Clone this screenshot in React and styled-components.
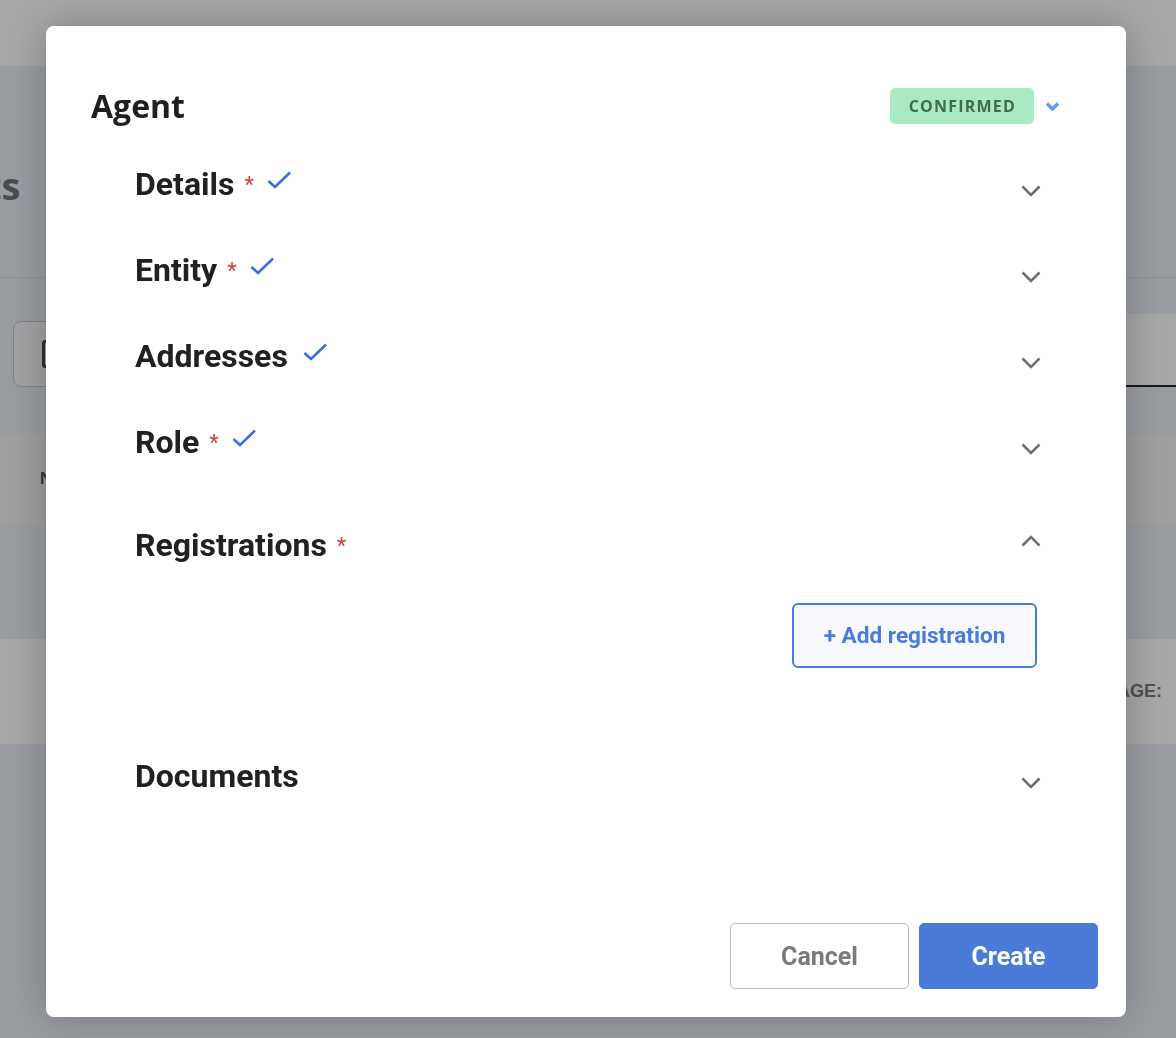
import React from "react";
import styled, { createGlobalStyle } from "styled-components";

const GlobalStyle = createGlobalStyle`
  html, body {
    margin: 0;
    padding: 0;
    overflow: hidden;
  }
  body {
    font-family: Roboto, "Liberation Sans", sans-serif;
  }
  * {
    box-sizing: border-box;
  }
`;

/* page behind the dialog */

const Page = styled.div`
  width: 100vw;
  height: 100vh;
  background-color: #eaf0f8;
  overflow: hidden;
`;

const TopBar = styled.div`
  height: 66px;
  background-color: #fff;
`;

const TitleArea = styled.div`
  height: 212px;
  display: flex;
  align-items: center;
  padding-top: 26px;
  border-bottom: 1px solid #d6dbe3;
`;

const PageTitle = styled.h1`
  margin: 0 0 0 -110px;
  font-family: "Open Sans", sans-serif;
  font-size: 38px;
  font-weight: 700;
  color: #707378;
`;

const Toolbar = styled.div`
  height: 156px;
  display: flex;
  justify-content: space-between;
  align-items: flex-start;
  padding-top: 36px;
`;

const FilterBox = styled.div`
  margin: 7px 0 0 13px;
  width: 320px;
  height: 66px;
  border: 1px solid #c3c6ca;
  border-radius: 8px;
  background-color: #f7f8fa;
  display: flex;
  align-items: center;
  padding-left: 28px;
`;

const FilterIcon = styled.div`
  width: 18px;
  height: 28px;
  border: 3px solid #4a4a4a;
  border-radius: 3px;
`;

const SearchField = styled.div`
  width: 300px;
  height: 73px;
  background-color: #fff;
  border-bottom: 2px solid #262626;
`;

const TableHead = styled.div`
  height: 90px;
  background-color: #f3f3f3;
  display: flex;
  align-items: center;
  padding-left: 40px;
  font-family: "Liberation Sans", sans-serif;
  font-size: 17px;
  font-weight: 700;
  color: #555;
`;

const EmptyRow = styled.div`
  height: 115px;
`;

const Pagination = styled.div`
  height: 105px;
  background-color: #fff;
  display: flex;
  align-items: center;
  justify-content: flex-end;
  padding-right: 14px;
  font-family: "Liberation Sans", sans-serif;
  font-size: 18px;
  font-weight: 700;
  color: #767b84;
`;

/* dialog */

const Overlay = styled.div`
  position: fixed;
  inset: 0;
  background-color: rgba(0, 0, 0, 0.345);
  display: flex;
  align-items: flex-start;
  padding: 26px 0 0 46px;
`;

const Modal = styled.div`
  width: 1080px;
  height: 991px;
  background-color: #fff;
  border-radius: 8px;
  box-shadow: 0 0 40px rgba(0, 0, 0, 0.25);
  display: flex;
  flex-direction: column;
  padding: 60px 28px 28px 45px;
`;

const Header = styled.div`
  height: 40px;
  display: flex;
  align-items: center;
  justify-content: space-between;
  padding-right: 38px;
`;

const DialogTitle = styled.h2`
  margin: 0;
  font-family: "Open Sans", sans-serif;
  font-size: 32px;
  line-height: 40px;
  font-weight: 700;
  color: #1f1f1f;
`;

const StatusGroup = styled.div`
  display: flex;
  align-items: center;
  gap: 11px;
`;

const Badge = styled.span`
  height: 36px;
  padding: 0 18px 0 19px;
  display: flex;
  align-items: center;
  border-radius: 5px;
  background-color: #a9eac5;
  color: #3f6c4b;
  font-family: "Open Sans", sans-serif;
  font-size: 16px;
  font-weight: 700;
  letter-spacing: 1.2px;
`;

const SectionList = styled.div`
  margin: 15px 57px 0 44px;
  display: flex;
  flex-direction: column;
`;

const Row = styled.div`
  height: 86px;
  margin-top: ${(p) => (p.$gap ? p.$gap : 0)}px;
  display: flex;
  align-items: center;
  justify-content: space-between;
`;

const TitleGroup = styled.div`
  display: flex;
  align-items: flex-start;
`;

const SectionTitle = styled.h3`
  margin: 0;
  font-size: 32px;
  line-height: 32px;
  font-weight: 700;
  color: #212121;
`;

const Required = styled.span`
  margin: 6px 0 0 10px;
  font-size: 22px;
  line-height: 22px;
  color: #c9473b;
`;

const Check = styled.svg`
  margin: 3px 0 0 ${(p) => (p.$after ? 13 : 15)}px;
`;

const Toggle = styled.svg`
  margin-top: ${(p) => (p.$open ? -9 : 14)}px;
`;

const SectionBody = styled.div`
  display: flex;
  justify-content: flex-end;
  padding: 15px 4px 65px 0;
`;

const AddButton = styled.button`
  width: 245px;
  height: 65px;
  border: 2px solid #4a7bd9;
  border-radius: 6px;
  background-color: #f7f9fe;
  color: #4a7bd9;
  font-family: Roboto, sans-serif;
  font-size: 22.6px;
  font-weight: 700;
  cursor: pointer;
`;

const Footer = styled.div`
  margin-top: auto;
  display: flex;
  justify-content: flex-end;
  gap: 10px;
`;

const FooterButton = styled.button`
  width: 179px;
  height: 66px;
  border-radius: 5px;
  border: 1px solid ${(p) => (p.$primary ? "#4a7bd9" : "#bdbdbd")};
  background-color: ${(p) => (p.$primary ? "#4a7bd9" : "#fff")};
  color: ${(p) => (p.$primary ? "#fff" : "#7a7a7a")};
  font-family: Roboto, sans-serif;
  font-size: 25px;
  font-weight: 700;
  cursor: pointer;
`;

function CheckMark({ afterStar }) {
  return (
    <Check $after={afterStar} width="25" height="18" viewBox="0 0 25 18">
      <polyline
        points="1.5,10 8,16 23,1.5"
        fill="none"
        stroke="#3b6fe0"
        strokeWidth="2.6"
      />
    </Check>
  );
}

function Chevron({ open }) {
  return (
    <Toggle $open={open} width="20" height="12" viewBox="0 0 20 12">
      <polyline
        points={open ? "1.5,10.5 10,2 18.5,10.5" : "1.5,1.5 10,10 18.5,1.5"}
        fill="none"
        stroke="#6e6e6e"
        strokeWidth="2.5"
      />
    </Toggle>
  );
}

const sections = [
  { title: "Details", required: true, done: true },
  { title: "Entity", required: true, done: true },
  { title: "Addresses", required: false, done: true },
  { title: "Role", required: true, done: true },
];

function App() {
  return (
    <>
      <GlobalStyle />
      <Page>
        <TopBar />
        <TitleArea>
          <PageTitle>Agents</PageTitle>
        </TitleArea>
        <Toolbar>
          <FilterBox>
            <FilterIcon />
          </FilterBox>
          <SearchField />
        </Toolbar>
        <TableHead>NAME</TableHead>
        <EmptyRow />
        <Pagination>ITEMS PER PAGE:</Pagination>
      </Page>

      <Overlay>
        <Modal>
          <Header>
            <DialogTitle>Agent</DialogTitle>
            <StatusGroup>
              <Badge>CONFIRMED</Badge>
              <svg width="15" height="11" viewBox="0 0 15 11">
                <polyline
                  points="2,2.5 7.5,8 13,2.5"
                  fill="none"
                  stroke="#5ba0f0"
                  strokeWidth="3.4"
                />
              </svg>
            </StatusGroup>
          </Header>

          <SectionList>
            {sections.map((s) => (
              <Row key={s.title}>
                <TitleGroup>
                  <SectionTitle>{s.title}</SectionTitle>
                  {s.required && <Required>*</Required>}
                  {s.done && <CheckMark afterStar={s.required} />}
                </TitleGroup>
                <Chevron />
              </Row>
            ))}

            <Row $gap={17}>
              <TitleGroup>
                <SectionTitle>Registrations</SectionTitle>
                <Required>*</Required>
              </TitleGroup>
              <Chevron open />
            </Row>
            <SectionBody>
              <AddButton>+ Add registration</AddButton>
            </SectionBody>

            <Row>
              <TitleGroup>
                <SectionTitle>Documents</SectionTitle>
              </TitleGroup>
              <Chevron />
            </Row>
          </SectionList>

          <Footer>
            <FooterButton>Cancel</FooterButton>
            <FooterButton $primary>Create</FooterButton>
          </Footer>
        </Modal>
      </Overlay>
    </>
  );
}

export default App;
